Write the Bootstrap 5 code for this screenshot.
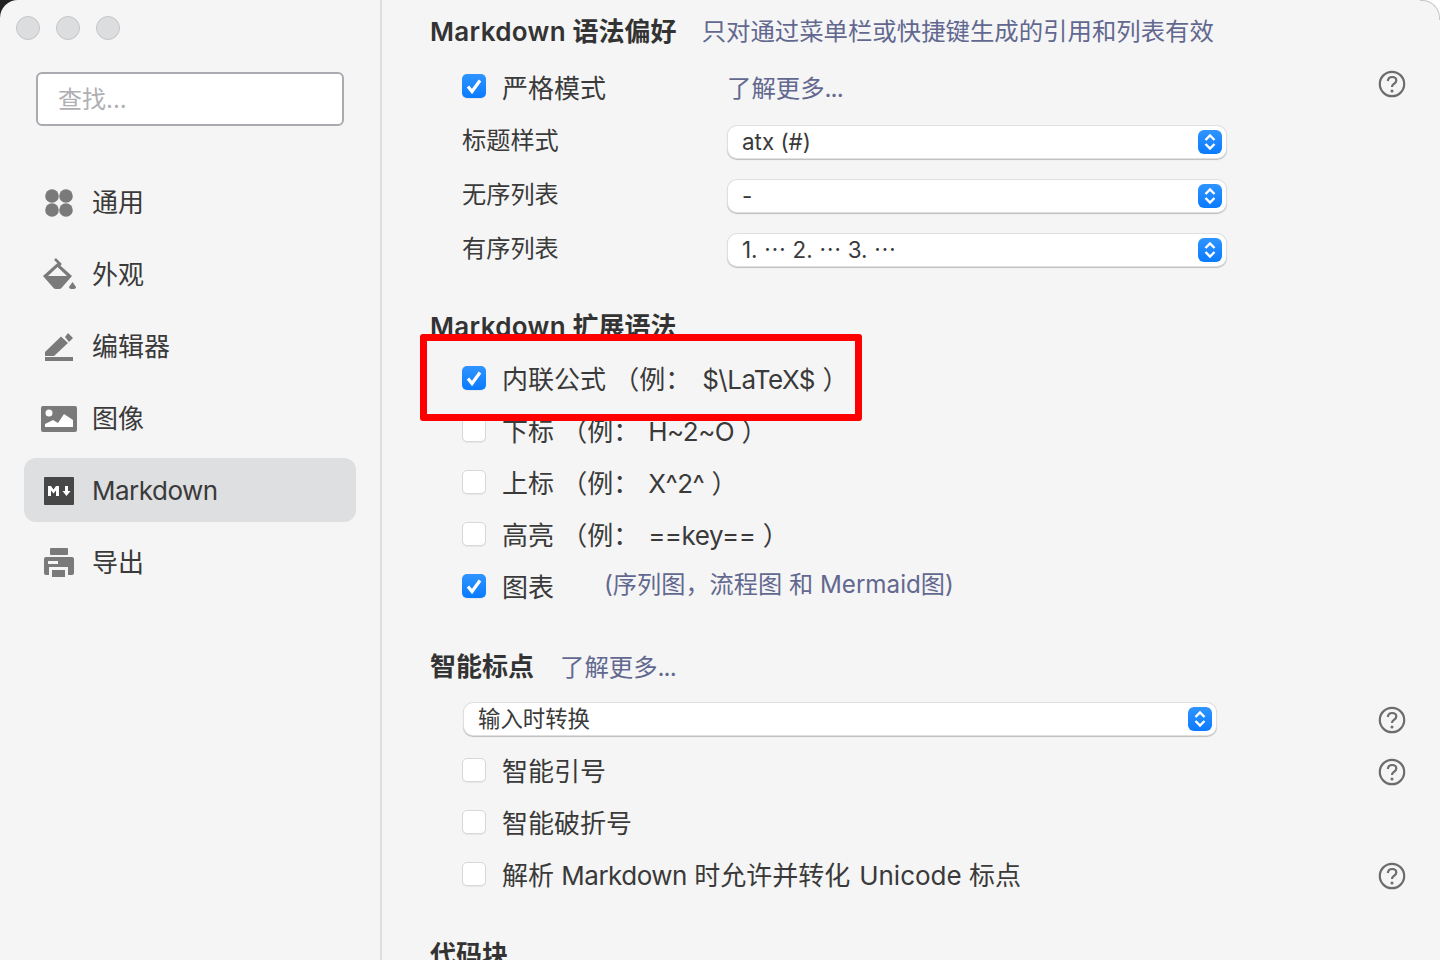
<!DOCTYPE html>
<html lang="zh">
<head>
  <meta charset="UTF-8">
  <title>偏好设置</title>
  <link href="https://cdn.jsdelivr.net/npm/bootstrap@5.3.3/dist/css/bootstrap.min.css" rel="stylesheet">
  <style>
    html, body {
      height: 100%;
      background: #fff;
    }
    body {
      font-family: Inter, "Noto Sans CJK SC", sans-serif;
      font-size: 26px;
      color: #3a3a3a;
      overflow: hidden;
      position: relative;
    }
    .corner-dark {
      position: absolute;
      left: 0;
      top: 0;
      width: 20px;
      height: 20px;
      background: #222;
    }
    .corner-line {
      position: absolute;
      right: 0;
      top: 0;
      width: 20px;
      height: 20px;
      border-top: 1px solid #c6c6cc;
      border-right: 1px solid #c6c6cc;
      border-radius: 0 18px 0 0;
    }
    .win {
      position: relative;
      height: 960px;
      background: #f5f5f5;
      border-radius: 18px 18px 0 0;
      overflow: hidden;
    }
    .side {
      width: 382px;
      border-right: 2px solid #dddddd;
      padding: 16px 24px 0;
    }
    .lights { gap: 16px; margin-left: -8px; }
    .light {
      width: 24px;
      height: 24px;
      border-radius: 50%;
      background: #dcdddf;
      border: 1px solid #c4c5c8;
    }
    .search-box {
      width: 308px;
      height: 54px;
      margin: 32px 0 44px 12px;
      padding: 0 20px;
      background: #fff;
      border: 2px solid #aaaab0;
      border-radius: 6px;
      color: #b0b0b4;
      font-size: 24px;
      line-height: 51px;
    }
    .side-item {
      height: 64px;
      margin-bottom: 8px;
      padding-left: 16px;
      gap: 14px;
      border-radius: 12px;
    }
    .side-item.is-on { background: #dedfe1; }
    .side-icon { width: 38px; height: 38px; flex: none; }
    .pane {
      position: relative;
      padding: 0 34px 0 48px;
      min-width: 0;
    }
    .lat { letter-spacing: -.5px; }
    .lat-gap { margin-left: 1.5px; }
    .lat-gap-wide { margin-left: 3.5px; }
    .lat-bold { letter-spacing: .35px; }
    .head-first { height: 62px; padding-top: 2px; }
    .head-ext { height: 36px; margin-top: 33px; }
    .head-smart { height: 36px; margin-top: 36px; }
    .head-code { height: 36px; margin-top: 36px; }
    .sect-title {
      font-weight: 600;
      color: #333;
      line-height: 36px;
      white-space: nowrap;
    }
    .tip { color: #62688f; font-size: 24.4px; }
    .tip-gap { margin-left: 26px; }
    .tip-top { margin-left: 25px; margin-bottom: 2px; }
    .dots { letter-spacing: -1px; }
    .set-row {
      height: 52px;
      padding-left: 32px;
      white-space: nowrap;
    }
    .set-row.is-tall { height: 54px; }
    .after-head { margin-top: 8px; }
    .tick {
      width: 24px;
      height: 24px;
      flex: none;
      margin-right: 16px;
      margin-bottom: 2px;
      background: #fff;
      border: 1px solid #d8d8d8;
      border-radius: 5px;
      box-shadow: 0 1px 1px rgba(0, 0, 0, .06);
    }
    .tick.is-on {
      border: 0;
      background: linear-gradient(#2f94ff, #0a7bff);
    }
    .tick svg { display: block; }
    .tick-first { margin-bottom: 4px; }
    .label-first { width: 225px; flex: none; }
    .label-col { width: 266px; flex: none; font-size: 24.2px; }
    .label-chart { width: 102px; }
    .tip-chart { font-size: 24.2px; margin-bottom: 4px; }
    .picker {
      height: 32px;
      margin-top: 2px;
      background: #fff;
      border-radius: 9px;
      box-shadow: 0 0 0 1px #e0e0e0, 0 1px 1px 1px #bdbdbd;
      padding: 0 4px 0 14px;
      font-size: 22.4px;
      line-height: 32px;
    }
    .picker-half { width: 498px; }
    .picker-full { width: 752px; margin-left: 2px; margin-top: 0; }
    .picker-btn {
      width: 24px;
      height: 24px;
      flex: none;
      border-radius: 6px;
      background: linear-gradient(#2f94ff, #0a7bff);
    }
    .picker-btn svg { display: block; }
    .help { width: 28px; height: 28px; flex: none; margin-top: 2px; }
    .help-first { margin-top: 0; margin-bottom: 8px; }
    .red-frame {
      position: absolute;
      left: 38px;
      top: 334px;
      width: 442px;
      height: 87px;
      border: 7px solid #fe0000;
      border-radius: 3px;
    }
  </style>
</head>
<body>
  <div class="corner-dark"></div>
  <div class="win d-flex">
    <div class="side flex-shrink-0">
      <div class="lights d-flex">
        <div class="light"></div><div class="light"></div><div class="light"></div>
      </div>
      <div class="search-box">查找...</div>

      <div class="side-item d-flex align-items-center">
        <svg class="side-icon" viewBox="0 0 38 38" fill="#7a7a7a"><circle cx="12" cy="13" r="6.800"/><circle cx="26" cy="13" r="6.800"/><circle cx="12" cy="27" r="6.800"/><circle cx="26" cy="27" r="6.800"/></svg>
        <span>通用</span>
      </div>
      <div class="side-item d-flex align-items-center">
        <svg class="side-icon" viewBox="0 0 38 38" fill="#7a7a7a"><path fill-rule="evenodd" d="M17.500 8 32 21 21 33.500q-3.500 1-7 0L3 21zM17.500 12 8 21h19z"/><path d="M15 4l6 6" stroke="#7a7a7a" stroke-width="2.500"/><path d="M32.500 27l3.500 5q0 2-3.500 2t-3.500-2z"/></svg>
        <span>外观</span>
      </div>
      <div class="side-item d-flex align-items-center">
        <svg class="side-icon" viewBox="0 0 38 38" fill="#7a7a7a"><path d="M5 25 21 9.500 28 16 14 29H5zM25 10l3-4 5 5-4 4z"/><path d="M5 30h28v4H5z"/></svg>
        <span>编辑器</span>
      </div>
      <div class="side-item d-flex align-items-center">
        <svg class="side-icon" viewBox="0 0 38 38"><rect x="1" y="7" width="36" height="26" rx="2" fill="#7a7a7a"/><circle cx="9" cy="14" r="3.500" fill="#fff"/><path d="M5 28v-3l8-4 5 3 6-9 9 6v7z" fill="#fff"/></svg>
        <span>图像</span>
      </div>
      <div class="side-item is-on d-flex align-items-center">
        <svg class="side-icon" viewBox="0 0 38 38"><rect x="4" y="6" width="30" height="28" rx="1" fill="#474747"/><path d="M8 25V15h3l2.500 3.500L16 15h3v10h-3v-5.500l-2.500 3-2.500-3V25zM25 15h3v5h2.500l-4 5-4-5H25z" fill="#fff"/></svg>
        <span class="lat">Markdown</span>
      </div>
      <div class="side-item d-flex align-items-center">
        <svg class="side-icon" viewBox="0 0 38 38"><rect x="10" y="5" width="18" height="7" rx="1" fill="#7a7a7a"/><rect x="4" y="14" width="30" height="18" rx="2" fill="#7a7a7a"/><rect x="8" y="18" width="10" height="3" fill="#f5f5f5"/><rect x="9" y="24" width="19" height="10" fill="#f5f5f5"/><rect x="12" y="27" width="13" height="7" fill="#7a7a7a"/></svg>
        <span>导出</span>
      </div>
    </div>

    <div class="pane flex-grow-1">
      <div class="head-first d-flex align-items-center">
        <span class="sect-title"><span class="lat-bold">Markdown</span> 语法偏好</span>
        <span class="tip tip-top">只对通过菜单栏或快捷键生成的引用和列表有效</span>
      </div>

      <div class="set-row d-flex align-items-center">
        <div class="tick tick-first is-on"><svg viewBox="0 0 24 24"><path d="M6 12.500l4 5 8-11" fill="none" stroke="#fff" stroke-width="3.200"/></svg></div>
        <span class="label-first">严格模式</span>
        <span class="tip flex-grow-1">了解更多<span class="dots">...</span></span>
        <svg class="help help-first" viewBox="0 0 28 28"><circle cx="14" cy="14" r="12.200" fill="none" stroke="#6c6c6c" stroke-width="2.200"/><path d="M9.800 11q.5-4 4.300-4 4.200 0 4.200 3.500 0 2-2.500 3.500-1.800 1-1.800 3" fill="none" stroke="#6c6c6c" stroke-width="2.200"/><circle cx="14" cy="21" r="1.500" fill="#6c6c6c"/></svg>
      </div>
      <div class="set-row is-tall d-flex align-items-center">
        <span class="label-col">标题样式</span>
        <div class="picker picker-half d-flex align-items-center justify-content-between"><span>atx (#)</span><div class="picker-btn"><svg viewBox="0 0 24 24"><path d="M7.500 10 12 5.500l4.500 4.500M7.500 14l4.500 4.500 4.500-4.500" fill="none" stroke="#fff" stroke-width="2.400"/></svg></div></div>
      </div>
      <div class="set-row is-tall d-flex align-items-center">
        <span class="label-col">无序列表</span>
        <div class="picker picker-half d-flex align-items-center justify-content-between"><span>-</span><div class="picker-btn"><svg viewBox="0 0 24 24"><path d="M7.500 10 12 5.500l4.500 4.500M7.500 14l4.500 4.500 4.500-4.500" fill="none" stroke="#fff" stroke-width="2.400"/></svg></div></div>
      </div>
      <div class="set-row is-tall d-flex align-items-center">
        <span class="label-col">有序列表</span>
        <div class="picker picker-half d-flex align-items-center justify-content-between"><span>1. ⋯ 2. ⋯ 3. ⋯</span><div class="picker-btn"><svg viewBox="0 0 24 24"><path d="M7.500 10 12 5.500l4.500 4.500M7.500 14l4.500 4.500 4.500-4.500" fill="none" stroke="#fff" stroke-width="2.400"/></svg></div></div>
      </div>

      <div class="head-ext d-flex align-items-center">
        <span class="sect-title"><span class="lat-bold">Markdown</span> 扩展语法</span>
      </div>

      <div class="set-row after-head d-flex align-items-center">
        <div class="tick is-on"><svg viewBox="0 0 24 24"><path d="M6 12.500l4 5 8-11" fill="none" stroke="#fff" stroke-width="3.200"/></svg></div>
        <span>内联公式 （例： <span class="lat lat-gap-wide">$\LaTeX$</span> ）</span>
      </div>
      <div class="set-row d-flex align-items-center">
        <div class="tick"></div>
        <span>下标 （例： <span class="lat lat-gap">H~2~O</span> ）</span>
      </div>
      <div class="set-row d-flex align-items-center">
        <div class="tick"></div>
        <span>上标 （例： <span class="lat lat-gap">X^2^</span> ）</span>
      </div>
      <div class="set-row d-flex align-items-center">
        <div class="tick"></div>
        <span>高亮 （例： <span class="lat lat-gap">==key==</span> ）</span>
      </div>
      <div class="set-row d-flex align-items-center">
        <div class="tick is-on"><svg viewBox="0 0 24 24"><path d="M6 12.500l4 5 8-11" fill="none" stroke="#fff" stroke-width="3.200"/></svg></div>
        <span class="label-chart">图表</span>
        <span class="tip tip-chart">(序列图，流程图 和 Mermaid图)</span>
      </div>

      <div class="head-smart d-flex align-items-center">
        <span class="sect-title">智能标点</span>
        <span class="tip tip-gap">了解更多<span class="dots">...</span></span>
      </div>

      <div class="set-row after-head d-flex align-items-center">
        <div class="picker picker-full d-flex align-items-center justify-content-between flex-shrink-0"><span>输入时转换</span><div class="picker-btn"><svg viewBox="0 0 24 24"><path d="M7.500 10 12 5.500l4.500 4.500M7.500 14l4.500 4.500 4.500-4.500" fill="none" stroke="#fff" stroke-width="2.400"/></svg></div></div>
        <svg class="help ms-auto" viewBox="0 0 28 28"><circle cx="14" cy="14" r="12.200" fill="none" stroke="#6c6c6c" stroke-width="2.200"/><path d="M9.800 11q.5-4 4.300-4 4.200 0 4.200 3.500 0 2-2.500 3.500-1.800 1-1.800 3" fill="none" stroke="#6c6c6c" stroke-width="2.200"/><circle cx="14" cy="21" r="1.500" fill="#6c6c6c"/></svg>
      </div>
      <div class="set-row d-flex align-items-center">
        <div class="tick"></div>
        <span>智能引号</span>
        <svg class="help ms-auto" viewBox="0 0 28 28"><circle cx="14" cy="14" r="12.200" fill="none" stroke="#6c6c6c" stroke-width="2.200"/><path d="M9.800 11q.5-4 4.300-4 4.200 0 4.200 3.500 0 2-2.500 3.500-1.800 1-1.800 3" fill="none" stroke="#6c6c6c" stroke-width="2.200"/><circle cx="14" cy="21" r="1.500" fill="#6c6c6c"/></svg>
      </div>
      <div class="set-row d-flex align-items-center">
        <div class="tick"></div>
        <span>智能破折号</span>
      </div>
      <div class="set-row d-flex align-items-center">
        <div class="tick"></div>
        <span>解析 <span class="lat">Markdown</span> 时允许并转化 <span class="lat-gap">Unicode</span> 标点</span>
        <svg class="help ms-auto" viewBox="0 0 28 28"><circle cx="14" cy="14" r="12.200" fill="none" stroke="#6c6c6c" stroke-width="2.200"/><path d="M9.800 11q.5-4 4.300-4 4.200 0 4.200 3.500 0 2-2.500 3.500-1.800 1-1.800 3" fill="none" stroke="#6c6c6c" stroke-width="2.200"/><circle cx="14" cy="21" r="1.500" fill="#6c6c6c"/></svg>
      </div>

      <div class="head-code d-flex align-items-center">
        <span class="sect-title">代码块</span>
      </div>

      <div class="red-frame"></div>
    </div>
  </div>
  <div class="corner-line"></div>
  <script src="https://cdn.jsdelivr.net/npm/bootstrap@5.3.3/dist/js/bootstrap.bundle.min.js"></script>
</body>
</html>
